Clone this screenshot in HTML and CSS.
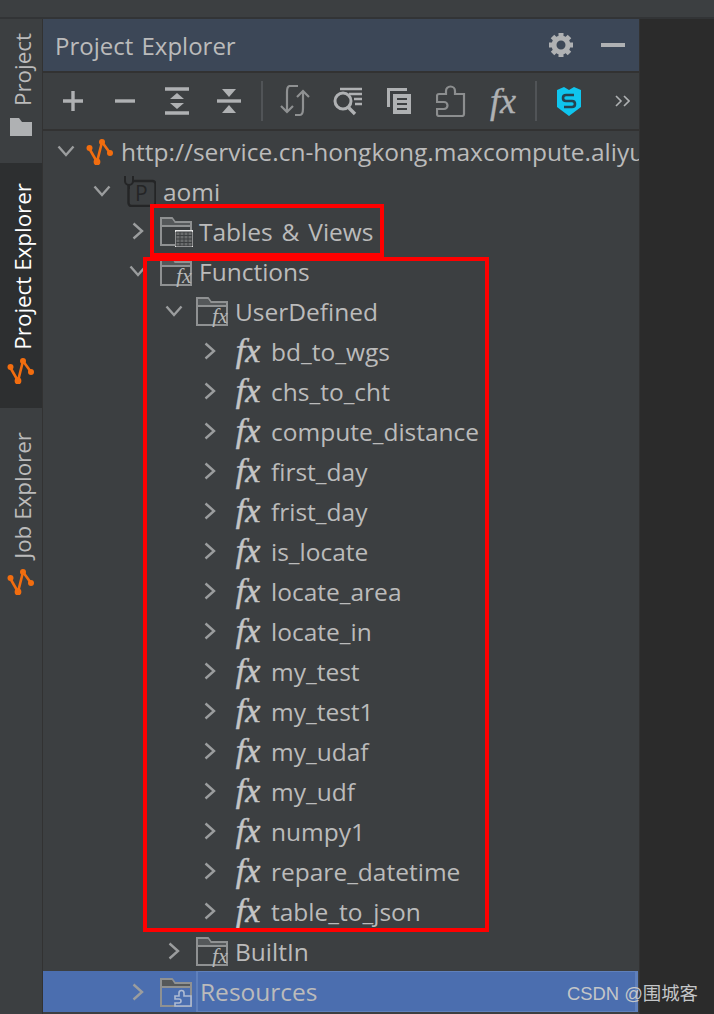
FILE: index.html
```html
<!DOCTYPE html>
<html lang="en">
<head>
    <meta charset="UTF-8">
    <meta name="viewport" content="width=device-width, initial-scale=1.0">
    <title>Project Explorer</title>
    <link rel="stylesheet" href="styles.css">
</head>
<body>
    <!-- shared icons -->
    <svg class="defs" width="0" height="0">
        <symbol id="logo" viewBox="0 0 28 28">
            <path d="M3 11 L11 25 L16 5 L24 16" fill="none" stroke="#f26d0f" stroke-width="2.6"/>
            <circle cx="3.5" cy="11" r="3" fill="#f26d0f"/>
            <circle cx="11" cy="25" r="3.4" fill="#f26d0f"/>
            <circle cx="16" cy="5" r="3" fill="#f26d0f"/>
            <circle cx="24" cy="16" r="3" fill="#f26d0f"/>
        </symbol>
        <symbol id="right" viewBox="0 0 12 18">
            <path d="M1.5 1.5 L10 9 L1.5 16.5" fill="none" stroke="#9b9d9e" stroke-width="2.4"/>
        </symbol>
        <symbol id="down" viewBox="0 0 18 12">
            <path d="M1.5 1.5 L9 10 L16.5 1.5" fill="none" stroke="#9b9d9e" stroke-width="2.4"/>
        </symbol>
        <symbol id="folder" viewBox="0 0 32 30">
            <path d="M1 29 V2 H12 L15 6 H31 V29 Z M1 10 H31" fill="none" stroke="#8f9192" stroke-width="2"/>
            <path d="M2 3 H12 L14.500 7 H30 V9 H2 Z" fill="#55585a"/>
        </symbol>
    </svg>

    <div class="top-bar"></div>

    <div class="layout">
        <div class="side-tabs">
            <div class="tab tab-project">
                <span class="tab-label">Project</span>
                <svg width="24" height="20" viewBox="0 0 24 20"><path d="M1 1 H10 L13 5 H23 V19 H1 Z" fill="#afb1b3"/></svg>
            </div>
            <div class="tab tab-active tab-explorer">
                <span class="tab-label">Project Explorer</span>
                <svg width="28" height="28"><use href="#logo"/></svg>
            </div>
            <div class="tab tab-job">
                <span class="tab-label">Job Explorer</span>
                <svg width="28" height="28"><use href="#logo"/></svg>
            </div>
        </div>

        <div class="panel">
            <div class="panel-header">
                <span class="panel-title">Project Explorer</span>
                <svg class="gear" width="26" height="26" viewBox="0 0 26 26">
                    <circle cx="13" cy="13" r="7" fill="none" stroke="#afb1b3" stroke-width="5"/>
                    <path d="M13 1 V25 M1 13 H25 M4.500 4.500 L21.500 21.500 M21.500 4.500 L4.500 21.500" stroke="#afb1b3" stroke-width="5" stroke-dasharray="5 14"/>
                </svg>
                <span class="minimize"></span>
            </div>

            <div class="toolbar">
                <span class="tool"><svg width="22" height="22" viewBox="0 0 22 22"><path d="M11 1 V21 M1 11 H21" stroke="#afb1b3" stroke-width="3.400"/></svg></span>
                <span class="tool"><svg width="22" height="22" viewBox="0 0 22 22"><path d="M1 11 H21" stroke="#afb1b3" stroke-width="3.400"/></svg></span>
                <span class="tool"><svg width="24" height="28" viewBox="0 0 24 28"><path d="M0 2 H24 M0 26 H24" stroke="#afb1b3" stroke-width="3.400"/><path d="M12 6 L19 12 H5 Z M5 16 H19 L12 22 Z" fill="#afb1b3"/></svg></span>
                <span class="tool"><svg width="24" height="28" viewBox="0 0 24 28"><path d="M0 14 H24" stroke="#afb1b3" stroke-width="3.400"/><path d="M5 2 H19 L12 10 Z M12 18 L19 26 H5 Z" fill="#afb1b3"/></svg></span>
                <span class="tool-sep"></span>
                <span class="tool"><svg width="32" height="32" viewBox="0 0 32 32"><path d="M19 1 H11 Q8 1 8 7 V26 M2 21 L8 27 L14 21 M16 30 H21 Q24 30 24 23 V7 M18 12 L24 6 L30 12" fill="none" stroke="#8f9192" stroke-width="2.200"/></svg></span>
                <span class="tool"><svg width="30" height="30" viewBox="0 0 30 30"><circle cx="11" cy="15" r="8" fill="none" stroke="#afb1b3" stroke-width="3"/><path d="M16 21 L23 28" stroke="#afb1b3" stroke-width="3.400"/><path d="M8 3 H30 M17 8 H30 M22 13 H30 M23 18 H30" stroke="#afb1b3" stroke-width="2.400"/></svg></span>
                <span class="tool"><svg width="24" height="26" viewBox="0 0 24 26"><path d="M0 0 H20 V3 H3 V19 H0 Z" fill="#afb1b3"/><path d="M6 6 H24 V26 H6 Z" fill="#afb1b3"/><path d="M10 11 H20 M10 16 H20 M10 21 H20" stroke="#3c3f41" stroke-width="2"/></svg></span>
                <span class="tool"><svg width="30" height="32" viewBox="0 0 30 32"><path d="M3 9 H10 V6 A4.500 4.500 0 0 1 19 6 V9 H28 V29 Q28 31 26 31 H3 Q1 31 1 29 V24 H8 A3 3 0 0 0 8 17 H1 V11 Q1 9 3 9 Z" fill="none" stroke="#8c8e8f" stroke-width="2.200"/></svg></span>
                <span class="tool"><span class="fx fx-tool">fx</span></span>
                <span class="tool-sep"></span>
                <span class="tool"><svg width="26" height="32" viewBox="0 0 26 32"><path d="M1 5 L8 2 L13 5 L18 2 L25 5 V22 L13 31 L1 22 Z" fill="#0fc5ee"/><path d="M18 10 H10 Q7 10 7 13 Q7 16 10 16 H16 Q19 16 19 19 Q19 22 16 22 H8" fill="none" stroke="#25424f" stroke-width="2.600"/></svg></span>
                <svg class="more" width="15" height="12" viewBox="0 0 15 12"><path d="M1 1 L6 6 L1 11 M9 1 L14 6 L9 11" fill="none" stroke="#afb1b3" stroke-width="1.600"/></svg>
            </div>

            <div class="tree">
                <div class="row">
                    <svg class="arrow-down" width="18" height="12"><use href="#down"/></svg>
                    <svg class="icon-logo" width="28" height="28"><use href="#logo"/></svg>
                    <span class="name">http://service.cn-hongkong.maxcompute.aliyu</span>
                </div>
                <div class="row depth-1">
                    <svg class="arrow-down" width="18" height="12"><use href="#down"/></svg>
                    <svg class="icon" width="32" height="32" viewBox="0 0 32 32">
                        <rect x="4.500" y="6" width="27" height="25" rx="3" fill="none" stroke="#242526" stroke-width="2.400"/>
                        <text x="11" y="26" class="p-mark">P</text>
                        <path d="M1 1 V6 A4 4 0 0 0 9 6 V1 M5 10 V14" fill="#3c3f41" stroke="#242526" stroke-width="2"/>
                    </svg>
                    <span class="name">aomi</span>
                </div>
                <div class="row depth-2">
                    <svg class="arrow-right" width="12" height="18"><use href="#right"/></svg>
                    <svg class="icon" width="34" height="32" viewBox="0 0 34 32">
                        <use href="#folder" width="32" height="30" y="1"/>
                        <rect x="15" y="15" width="18" height="17" fill="#e4e4e4"/>
                        <path d="M16 17 H32 V31 H16 Z M16 20.500 H32 M16 24 H32 M16 27.500 H32 M20 17 V31 M24 17 V31 M28 17 V31" fill="#6a6c6d" stroke="#3c3f41" stroke-width="1"/>
                    </svg>
                    <span class="name">Tables &amp; Views</span>
                </div>
                <div class="row depth-2">
                    <svg class="arrow-down" width="18" height="12"><use href="#down"/></svg>
                    <svg class="icon" width="34" height="32" viewBox="0 0 34 32">
                        <use href="#folder" width="32" height="30" y="1"/>
                        <text x="16" y="28" class="fx-small">fx</text>
                    </svg>
                    <span class="name">Functions</span>
                </div>
                <div class="row depth-3">
                    <svg class="arrow-down" width="18" height="12"><use href="#down"/></svg>
                    <svg class="icon" width="34" height="32" viewBox="0 0 34 32">
                        <use href="#folder" width="32" height="30" y="1"/>
                        <text x="16" y="28" class="fx-small">fx</text>
                    </svg>
                    <span class="name">UserDefined</span>
                </div>
                <div class="row depth-4"><svg class="arrow-right" width="12" height="18"><use href="#right"/></svg><span class="fx fx-node">fx</span><span class="name">bd_to_wgs</span></div>
                <div class="row depth-4"><svg class="arrow-right" width="12" height="18"><use href="#right"/></svg><span class="fx fx-node">fx</span><span class="name">chs_to_cht</span></div>
                <div class="row depth-4"><svg class="arrow-right" width="12" height="18"><use href="#right"/></svg><span class="fx fx-node">fx</span><span class="name">compute_distance</span></div>
                <div class="row depth-4"><svg class="arrow-right" width="12" height="18"><use href="#right"/></svg><span class="fx fx-node">fx</span><span class="name">first_day</span></div>
                <div class="row depth-4"><svg class="arrow-right" width="12" height="18"><use href="#right"/></svg><span class="fx fx-node">fx</span><span class="name">frist_day</span></div>
                <div class="row depth-4"><svg class="arrow-right" width="12" height="18"><use href="#right"/></svg><span class="fx fx-node">fx</span><span class="name">is_locate</span></div>
                <div class="row depth-4"><svg class="arrow-right" width="12" height="18"><use href="#right"/></svg><span class="fx fx-node">fx</span><span class="name">locate_area</span></div>
                <div class="row depth-4"><svg class="arrow-right" width="12" height="18"><use href="#right"/></svg><span class="fx fx-node">fx</span><span class="name">locate_in</span></div>
                <div class="row depth-4"><svg class="arrow-right" width="12" height="18"><use href="#right"/></svg><span class="fx fx-node">fx</span><span class="name">my_test</span></div>
                <div class="row depth-4"><svg class="arrow-right" width="12" height="18"><use href="#right"/></svg><span class="fx fx-node">fx</span><span class="name">my_test1</span></div>
                <div class="row depth-4"><svg class="arrow-right" width="12" height="18"><use href="#right"/></svg><span class="fx fx-node">fx</span><span class="name">my_udaf</span></div>
                <div class="row depth-4"><svg class="arrow-right" width="12" height="18"><use href="#right"/></svg><span class="fx fx-node">fx</span><span class="name">my_udf</span></div>
                <div class="row depth-4"><svg class="arrow-right" width="12" height="18"><use href="#right"/></svg><span class="fx fx-node">fx</span><span class="name">numpy1</span></div>
                <div class="row depth-4"><svg class="arrow-right" width="12" height="18"><use href="#right"/></svg><span class="fx fx-node">fx</span><span class="name">repare_datetime</span></div>
                <div class="row depth-4"><svg class="arrow-right" width="12" height="18"><use href="#right"/></svg><span class="fx fx-node">fx</span><span class="name">table_to_json</span></div>
                <div class="row depth-3">
                    <svg class="arrow-right" width="12" height="18"><use href="#right"/></svg>
                    <svg class="icon" width="34" height="32" viewBox="0 0 34 32">
                        <use href="#folder" width="32" height="30" y="1"/>
                        <text x="16" y="28" class="fx-small">fx</text>
                    </svg>
                    <span class="name">BuiltIn</span>
                </div>
                <div class="row depth-2 selected">
                    <svg class="arrow-right" width="12" height="18"><use href="#right"/></svg>
                    <svg class="icon" width="34" height="32" viewBox="0 0 34 32">
                        <use href="#folder" width="32" height="30" y="1"/>
                        <path d="M15 20 H19 V17 A2.500 2.500 0 0 1 24 17 V20 H31 V30 H15 V27 H19 A2 2 0 0 0 19 23 H15 Z" fill="#4b6eaf" stroke="#aebbd3" stroke-width="1.600"/>
                    </svg>
                    <span class="name">Resources</span>
                </div>
            </div>

            <!-- red marks drawn over the tree -->
            <div class="mark mark-tables"></div>
            <div class="mark mark-functions"></div>
        </div>

        <div class="editor"></div>
    </div>

    <div class="watermark">CSDN @围城客</div>
</body>
</html>
```

FILE: styles.css
```css
body {
    margin: 0;
    padding: 0;
    width: 714px;
    height: 1014px;
    overflow: hidden;
    position: relative;
    background-color: #2b2b2b;
    color: #bbbbbb;
    font-family: "Open Sans", "Noto Sans", sans-serif;
}

.defs {
    position: absolute;
}

.top-bar {
    height: 17px;
    background-color: #3c3f41;
    border-bottom: 2px solid #323436;
}

.layout {
    display: flex;
    height: 995px;
}

/* left tool window strip */
.side-tabs {
    width: 42px;
    flex-shrink: 0;
    background-color: #3c3f41;
    border-right: 1px solid #323232;
}

.tab {
    display: flex;
    flex-direction: column;
    align-items: center;
    box-sizing: border-box;
    font-size: 22.4px;
    line-height: 28px;
}

.tab-label {
    margin-left: 4px;
    writing-mode: vertical-rl;
    transform: rotate(180deg);
}

.tab-active {
    background-color: #2d2f30;
    color: #ffffff;
}

.tab-project {
    height: 144px;
    padding-top: 14px;
    gap: 11px;
}

.tab-explorer {
    height: 245px;
    padding-top: 20px;
    gap: 6px;
}

.tab-job {
    height: 200px;
    padding-top: 24px;
    gap: 8px;
}

/* panel */
.panel {
    width: 596px;
    flex-shrink: 0;
    background-color: #3c3f41;
    overflow: hidden;
}

.panel-header {
    display: flex;
    align-items: center;
    height: 52px;
    background-color: #3c4757;
    border-bottom: 2px solid #323232;
    padding: 0 14px 0 12px;
}

.panel-title {
    flex: 1;
    font-size: 24px;
    word-spacing: 2px;
}

.gear {
    margin-right: 27px;
}

.minimize {
    width: 24px;
    height: 4px;
    background-color: #afb1b3;
}

.toolbar {
    display: flex;
    align-items: center;
    height: 56px;
    padding-left: 4px;
    border-bottom: 2px solid #323232;
}

.tool {
    width: 52px;
    height: 40px;
    display: flex;
    align-items: center;
    justify-content: center;
}

.tool-sep {
    width: 2px;
    height: 40px;
    margin: 0 6px;
    background-color: #515457;
}

.more {
    margin-left: 20px;
}

.fx {
    font-family: "Liberation Serif", serif;
    font-style: italic;
    color: #c4c5c6;
}

.fx-tool {
    font-size: 36px;
    line-height: 40px;
    color: #afb1b3;
    -webkit-text-stroke: 0.4px #afb1b3;
}

.fx-node {
    width: 42px;
    margin-left: 8px;
    padding-right: 2px;
    flex-shrink: 0;
    font-size: 34px;
    line-height: 34px;
    text-align: center;
    -webkit-text-stroke: 0.5px #c4c5c6;
}

.fx-small {
    font-family: "Liberation Serif", serif;
    font-style: italic;
    font-size: 22px;
    fill: #b6b7b8;
}

.p-mark {
    font-family: "Open Sans", sans-serif;
    font-size: 21px;
    fill: #242526;
}

/* tree */
.row {
    display: flex;
    align-items: center;
    height: 40px;
    padding-left: 14px;
    font-size: 24.5px;
    word-spacing: 2.5px;
    white-space: nowrap;
}

.depth-1 { padding-left: 50px; }
.depth-2 { padding-left: 86px; }
.depth-3 { padding-left: 122px; }
.depth-4 { padding-left: 158px; }

.arrow-right {
    margin: 0 3px;
    flex-shrink: 0;
}

.arrow-down {
    flex-shrink: 0;
}

.icon-logo {
    margin: 0 7px 0 11px;
    flex-shrink: 0;
}

.icon {
    margin: 0 5px 0 13px;
    flex-shrink: 0;
}

.depth-1 .icon {
    margin-right: 7px;
}

.selected {
    background-color: #4b6eaf;
    height: 41px;
    width: 595px;
    box-sizing: border-box;
}

.selected .name {
    flex: 1;
    align-self: stretch;
    display: flex;
    align-items: center;
    border: 1px solid #5f80bb;
    border-left-width: 2px;
    border-right-width: 3px;
    margin-left: -3px;
    padding-left: 2px;
}

/* red annotations */
.mark {
    position: absolute;
    box-sizing: border-box;
    border: 4px solid #ff0000;
}

.mark-tables {
    left: 150px;
    top: 204px;
    width: 234px;
    height: 53px;
}

.mark-functions {
    left: 143px;
    top: 257px;
    width: 346px;
    height: 675px;
}

.editor {
    flex: 1;
    background-color: #2b2b2b;
    border-left: 1px solid #323232;
}

.watermark {
    position: absolute;
    right: 16px;
    bottom: 9px;
    font-family: "Liberation Sans", "Noto Sans CJK SC", sans-serif;
    font-size: 18.4px;
    color: #c4c6c8;
}
```
